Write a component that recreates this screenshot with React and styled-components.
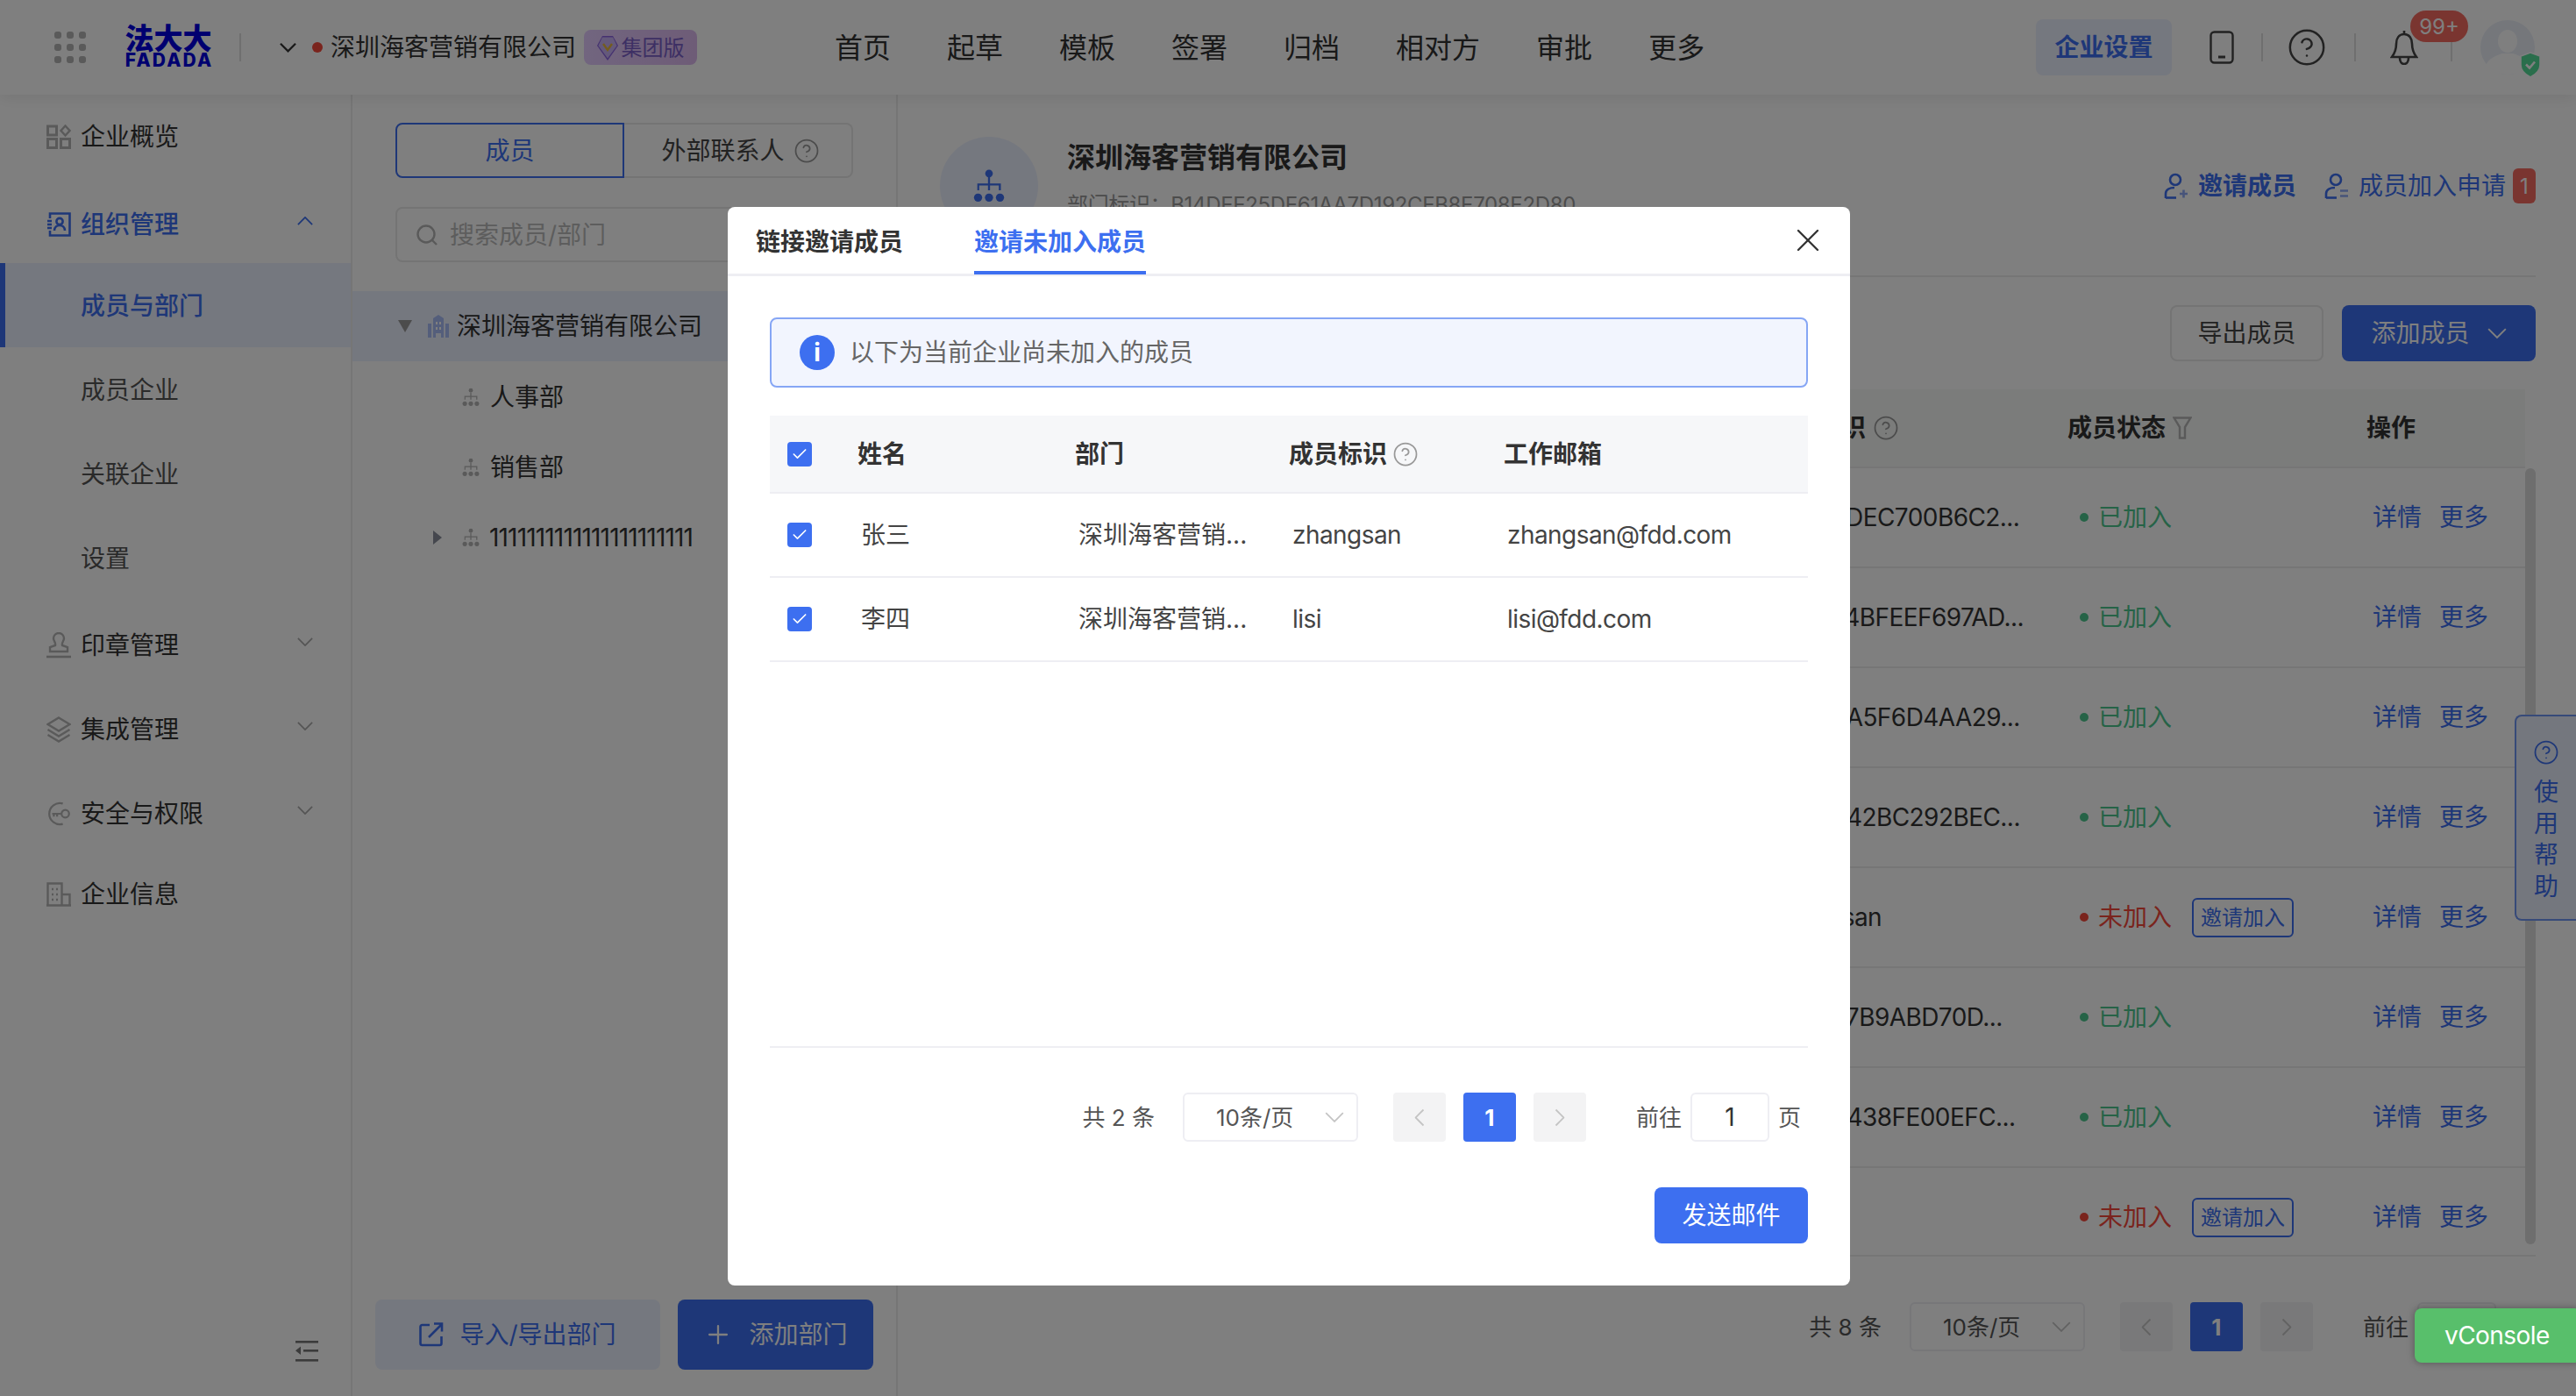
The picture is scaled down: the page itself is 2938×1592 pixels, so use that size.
import React from "react";
import styled, { createGlobalStyle } from "styled-components";
import { CircleHelp, X, Plus, Check } from "lucide-react";

const primary = "#3d6ff0";
const tint = "#ebf0fe";

const GlobalStyle = createGlobalStyle`
  html, body { margin: 0; padding: 0; background: #fff; }
  body {
    font-family: "Inter", "Noto Sans CJK SC", sans-serif;
    font-size: 28px;
    color: #333;
  }
  * { box-sizing: border-box; }
`;

// chinese glyphs sit a touch low next to Inter, this lifts them inside a centered flex row
const T = styled.span`
  display: block;
  margin-bottom: 4px;
  white-space: nowrap;
`;
const Latin = styled.span`
  letter-spacing: ${(p) => p.$ls || "-0.02em"};
`;

const Page = styled.div`
  position: relative;
  width: 2938px;
  height: 1592px;
  overflow: hidden;
  display: flex;
  flex-direction: column;
  background: #fff;
`;

/* ---------- top bar ---------- */
const TopBar = styled.header`
  position: relative;
  z-index: 2;
  flex: none;
  height: 108px;
  display: flex;
  align-items: center;
  padding-left: 62px;
  background: #fff;
  box-shadow: 0 4px 16px rgba(0, 0, 0, 0.08);
`;
const Logo = styled.div`
  margin-left: 46px;
  margin-bottom: 2px;
  width: 96px;
  display: flex;
  flex-direction: column;
  align-items: center;
  color: #0000e0;
`;
const LogoCn = styled.span`
  font-size: 33px;
  line-height: 32px;
  font-weight: 900;
  white-space: nowrap;
`;
const LogoEn = styled.span`
  font-size: 21px;
  line-height: 18px;
  font-weight: 800;
  letter-spacing: 2.2px;
  margin-right: -2.2px;
`;
const VLine = styled.i`
  flex: none;
  width: 2px;
  height: 32px;
  background: #dedede;
  margin-left: ${(p) => p.$ml || 0}px;
`;
const CompanyChevron = styled.span`
  display: flex;
  margin-left: 44px;
  color: #333;
`;
const RedDot = styled.i`
  width: 12px;
  height: 12px;
  border-radius: 50%;
  background: #f5483b;
  margin-left: 18px;
`;
const CompanyName = styled.span`
  margin-left: 9px;
  margin-bottom: 4px;
  font-size: 28px;
  color: #333;
  white-space: nowrap;
`;
const GroupBadge = styled.span`
  margin-left: 9px;
  width: 129px;
  height: 40px;
  border-radius: 8px;
  display: flex;
  align-items: center;
  justify-content: center;
  gap: 4px;
  font-size: 24px;
  color: #7a5fc8;
  background: linear-gradient(100deg, #e4ccff, #dcb8ee);
`;
const Nav = styled.nav`
  display: flex;
  gap: 64px;
  margin-left: 157px;
  margin-bottom: 4px;
  font-size: 32px;
  color: #333;
`;
const TopRight = styled.div`
  margin-left: auto;
  display: flex;
  align-items: center;
`;
const SettingBtn = styled.span`
  width: 155px;
  height: 64px;
  border-radius: 8px;
  background: ${tint};
  color: ${primary};
  font-weight: 600;
  display: flex;
  align-items: center;
  justify-content: center;
`;
const PhoneSlot = styled.span`
  display: flex;
  margin-left: 43px;
  color: #444;
`;
const HelpSlot = styled.span`
  display: flex;
  margin-left: 27px;
  color: #444;
`;
const BellSlot = styled.span`
  position: relative;
  display: flex;
  margin-left: 39px;
  margin-right: 37px;
  color: #444;
`;
const CountBadge = styled.span`
  position: absolute;
  left: 23px;
  top: -22px;
  width: 66px;
  height: 36px;
  border-radius: 18px;
  background: #f46a60;
  color: #fff;
  font-size: 24px;
  display: flex;
  align-items: center;
  justify-content: center;
`;
const Avatar = styled.span`
  position: relative;
  display: block;
  width: 62px;
  height: 62px;
  margin-left: 32px;
  margin-right: 47px;
  border-radius: 50%;
`;
const ShieldSlot = styled.span`
  position: absolute;
  left: 44px;
  top: 36px;
  display: flex;
`;

/* ---------- layout ---------- */
const Body = styled.div`
  flex: 1;
  min-height: 0;
  display: flex;
`;

/* ---------- sidebar ---------- */
const Sidebar = styled.aside`
  flex: none;
  width: 402px;
  border-right: 2px solid #ececec;
  display: flex;
  flex-direction: column;
  position: relative;
`;
const NavRow = styled.div`
  height: 96px;
  margin-top: ${(p) => p.$mt || 0}px;
  padding-top: ${(p) => p.$pt || 0}px;
  padding-left: 53px;
  padding-right: 43px;
  display: flex;
  align-items: center;
  gap: 11px;
  color: ${(p) => (p.$active ? primary : "#333")};
  font-weight: ${(p) => (p.$active ? 500 : 400)};
`;
const NavChevron = styled.span`
  margin-left: auto;
  display: flex;
  transform: translateY(-4px);
  color: ${(p) => (p.$active ? primary : "#aaa")};
`;
const SubRow = styled.div`
  height: 96px;
  padding-left: ${(p) => (p.$active ? 86 : 92)}px;
  padding-top: 2px;
  display: flex;
  align-items: center;
  color: ${(p) => (p.$active ? primary : "#555")};
  font-weight: ${(p) => (p.$active ? 500 : 400)};
  background: ${(p) => (p.$active ? tint : "transparent")};
  border-left: ${(p) => (p.$active ? `6px solid ${primary}` : "none")};
`;
const Collapse = styled.span`
  position: absolute;
  left: 337px;
  bottom: 39px;
  display: flex;
  color: #bbb;
`;

/* ---------- tree panel ---------- */
const TreePanel = styled.section`
  flex: none;
  width: 622px;
  border-right: 2px solid #ececec;
  padding-top: 32px;
  display: flex;
  flex-direction: column;
`;
const Switch = styled.div`
  margin: 0 49px;
  height: 63px;
  display: flex;
`;
const SwitchItem = styled.div`
  flex: none;
  width: ${(p) => p.$w}px;
  display: flex;
  align-items: center;
  justify-content: center;
  gap: 10px;
  padding-left: ${(p) => p.$pl || 0}px;
  border: 2px solid ${(p) => (p.$active ? primary : "#e8e8e8")};
  border-left-width: ${(p) => (p.$active ? 2 : 0)}px;
  border-radius: ${(p) => (p.$active ? "8px 0 0 8px" : "0 8px 8px 0")};
  color: ${(p) => (p.$active ? primary : "#444")};
`;
const HelpTint = styled.span`
  display: inline-flex;
  color: ${(p) => p.$c || "#999"};
`;
const Search = styled.div`
  margin: 33px 50px 0 49px;
  height: 63px;
  border: 2px solid #e8e8e8;
  border-radius: 8px;
  display: flex;
  align-items: center;
  gap: 14px;
  padding-left: 22px;
  color: #bbb;
`;
const Tree = styled.div`
  margin-top: 33px;
`;
const TreeRow = styled.div`
  height: 80px;
  display: flex;
  align-items: center;
  padding-left: ${(p) => p.$indent}px;
  padding-top: ${(p) => (p.$active ? 0 : 2)}px;
  background: ${(p) => (p.$active ? tint : "transparent")};
  color: #333;
`;
const Caret = styled.span`
  flex: none;
  width: 0;
  height: 0;
  ${(p) =>
    p.$open
      ? `border-left: 8px solid transparent; border-right: 8px solid transparent; border-top: 14px solid #999; margin-right: 18px;`
      : `border-top: 8px solid transparent; border-bottom: 8px solid transparent; border-left: 10px solid #8a8f9c; margin-right: 22px;`}
`;
const TreeIcon = styled.span`
  display: flex;
  flex: none;
  margin-right: ${(p) => p.$mr}px;
`;
const TreeFoot = styled.div`
  margin-top: auto;
  padding: 0 0 30px 26px;
  display: flex;
  gap: 20px;
`;
const GhostBtn = styled.div`
  width: ${(p) => p.$w}px;
  height: 80px;
  border-radius: 8px;
  background: ${tint};
  color: ${primary};
  display: flex;
  align-items: center;
  justify-content: center;
  gap: 18px;
`;
const SolidBtn = styled.div`
  width: ${(p) => p.$w}px;
  height: ${(p) => p.$h}px;
  border-radius: 8px;
  background: ${primary};
  color: #fff;
  display: flex;
  align-items: center;
  justify-content: center;
  gap: ${(p) => p.$gap || 0}px;
`;

/* ---------- main panel ---------- */
const Main = styled.main`
  flex: 1;
  min-width: 0;
  padding: 0 46px 0 48px;
  display: flex;
  flex-direction: column;
`;
const MainHead = styled.div`
  height: 208px;
  padding-top: 48px;
  border-bottom: 2px solid #ececec;
  display: flex;
`;
const OrgBubble = styled.div`
  flex: none;
  width: 112px;
  height: 112px;
  border-radius: 50%;
  background: ${tint};
  display: flex;
  align-items: center;
  justify-content: center;
  color: ${primary};
`;
const HeadText = styled.div`
  margin-left: 33px;
  padding-top: 2px;
`;
const HeadTitle = styled.div`
  font-size: 32px;
  line-height: 44px;
  font-weight: 700;
  color: #333;
`;
const HeadSub = styled.div`
  margin-top: 16px;
  font-size: 24px;
  line-height: 32px;
  letter-spacing: -0.35px;
  color: #999;
`;
const HeadLinks = styled.div`
  margin-left: auto;
  padding-top: 36px;
  display: flex;
  align-items: flex-start;
  height: 56px;
  color: ${primary};
`;
const HeadLink = styled.span`
  display: flex;
  align-items: center;
  gap: 11px;
  height: 40px;
  font-weight: ${(p) => p.$w || 400};
  margin-left: ${(p) => p.$ml || 0}px;
`;
const CountTag = styled.span`
  margin-left: 8px;
  width: 26px;
  height: 40px;
  border-radius: 6px;
  background: #f46a60;
  color: #fff;
  font-size: 24px;
  display: flex;
  align-items: center;
  justify-content: center;
`;
const Toolbar = styled.div`
  padding-top: 32px;
  height: 128px;
  display: flex;
  justify-content: flex-end;
  gap: 21px;
`;
const OutlineBtn = styled.div`
  width: 175px;
  height: 64px;
  border: 2px solid #e8e8e8;
  border-radius: 8px;
  color: #444;
  display: flex;
  align-items: center;
  justify-content: center;
`;
const MemberTable = styled.div`
  position: relative;
  height: 989px;
  overflow: hidden;
  border-bottom: 2px solid #ececec;
`;
const MemberRow = styled.div`
  display: grid;
  grid-template-columns: 944px 342px 341px 1fr;
  align-items: center;
  margin-right: 12px;
  height: ${(p) => (p.$head ? 90 : 114)}px;
  background: ${(p) => (p.$head ? "#f6f8f6" : "transparent")};
  border-bottom: 2px solid #ececec;
`;
const HeadCell = styled.div`
  display: flex;
  align-items: center;
  gap: 8px;
  font-weight: 700;
  color: #333;
  white-space: nowrap;
`;
const IdCell = styled.div`
  padding-left: 6px;
  color: #333;
  letter-spacing: -0.02em;
  white-space: nowrap;
`;
const StatusCell = styled.div`
  padding-left: 14px;
  display: flex;
  align-items: center;
`;
const StatusDot = styled.i`
  width: 10px;
  height: 10px;
  border-radius: 50%;
  background: ${(p) => (p.$on ? "#4cc78e" : "#f5483b")};
  margin-right: 11px;
`;
const StatusText = styled(T)`
  color: ${(p) => (p.$on ? "#4cc78e" : "#f5483b")};
`;
const InviteBtn = styled.span`
  margin-left: 23px;
  width: 116px;
  height: 45px;
  border: 2px solid ${primary};
  border-radius: 6px;
  color: ${primary};
  font-size: 24px;
  display: flex;
  align-items: center;
  justify-content: center;
  white-space: nowrap;
`;
const OpsCell = styled.div`
  display: flex;
  gap: 20px;
  padding-left: 7px;
  color: ${primary};
`;
const ScrollThumb = styled.div`
  position: absolute;
  right: 0;
  top: 90px;
  bottom: 12px;
  width: 12px;
  border-radius: 6px;
  background: #dcdcdc;
`;

/* ---------- pagination ---------- */
const Pager = styled.div`
  display: flex;
  justify-content: flex-end;
  align-items: center;
  height: 56px;
  margin-top: ${(p) => p.$mt}px;
  padding-right: ${(p) => p.$pr || 0}px;
  font-size: 26px;
  color: #555;
`;
const PagerSelect = styled.div`
  width: 200px;
  height: 56px;
  margin: 0 40px 0 32px;
  border: 2px solid #eeeef3;
  border-radius: 6px;
  display: flex;
  align-items: center;
  padding: 0 14px 0 36px;
  justify-content: space-between;
  color: #555;
`;
const PageBtn = styled.div`
  width: 60px;
  height: 56px;
  margin-right: ${(p) => p.$mr || 0}px;
  border-radius: 4px;
  background: ${(p) => (p.$active ? primary : "#f3f3f4")};
  color: ${(p) => (p.$active ? "#fff" : "#c4c4c4")};
  font-weight: 700;
  display: flex;
  align-items: center;
  justify-content: center;
`;
const PageInput = styled.div`
  width: 90px;
  height: 56px;
  margin: 0 10px;
  border: 2px solid #eeeef3;
  border-radius: 6px;
  color: #333;
  font-size: 28px;
  display: flex;
  align-items: center;
  justify-content: center;
`;

/* ---------- floating parts ---------- */
const HelpTab = styled.div`
  position: absolute;
  right: 0;
  top: 815px;
  width: 70px;
  height: 235px;
  background: #e8eefd;
  border: 2px solid #6f94f3;
  border-right: none;
  border-radius: 8px 0 0 8px;
  color: ${primary};
  display: flex;
  flex-direction: column;
  align-items: center;
  padding-top: 26px;
  line-height: 36px;
`;
const HelpChars = styled.div`
  width: 28px;
  margin-top: 12px;
  text-align: center;
`;
const Mask = styled.div`
  position: absolute;
  inset: 0;
  z-index: 10;
  background: rgba(0, 0, 0, 0.5);
`;
const VConsole = styled.div`
  position: absolute;
  z-index: 30;
  left: 2754px;
  top: 1492px;
  width: 190px;
  height: 62px;
  border-radius: 8px;
  background: #58bf6b;
  color: #fff;
  letter-spacing: -0.02em;
  box-shadow: 0 0 8px rgba(0, 0, 0, 0.35);
  display: flex;
  align-items: center;
  padding-left: 34px;
`;

/* ---------- dialog ---------- */
const Dialog = styled.div`
  position: absolute;
  z-index: 20;
  left: 830px;
  top: 236px;
  width: 1280px;
  height: 1230px;
  border-radius: 8px;
  background: #fff;
  display: flex;
  flex-direction: column;
`;
const DialogTabs = styled.div`
  flex: none;
  height: 79px;
  border-bottom: 3px solid #eeeef3;
  padding: 0 26px 0 32px;
  display: flex;
  align-items: center;
  gap: 81px;
`;
const DialogTab = styled.span`
  position: relative;
  font-weight: 700;
  color: ${(p) => (p.$active ? primary : "#333")};
  white-space: nowrap;
  &::after {
    content: "";
    display: ${(p) => (p.$active ? "block" : "none")};
    position: absolute;
    left: 0;
    right: 0;
    bottom: -19px;
    height: 4px;
    background: ${primary};
  }
`;
const CloseSlot = styled.span`
  margin-left: auto;
  display: flex;
  color: #333;
`;
const DialogBody = styled.div`
  flex: 1;
  padding: 47px 48px 0;
  display: flex;
  flex-direction: column;
`;
const InfoBar = styled.div`
  flex: none;
  height: 80px;
  border: 2px solid #86a6f5;
  border-radius: 8px;
  background: #f2f5fe;
  padding-left: 32px;
  display: flex;
  align-items: center;
  gap: 17px;
  color: #666;
`;
const InfoDot = styled.span`
  width: 40px;
  height: 40px;
  border-radius: 50%;
  background: ${primary};
  color: #fff;
  font-weight: 700;
  font-size: 28px;
  display: flex;
  align-items: center;
  justify-content: center;
`;
const PickTable = styled.div`
  flex: none;
  margin-top: 32px;
  height: 721px;
  border-bottom: 2px solid #eeeef3;
`;
const PickRow = styled.div`
  display: grid;
  grid-template-columns: 100px 248px 244px 245px 1fr;
  align-items: center;
  height: ${(p) => (p.$head ? 89 : 96)}px;
  border-bottom: 2px solid #eeeef3;
  background: ${(p) => (p.$head ? "#f6f7f9" : "transparent")};
`;
const PickHead = styled.div`
  display: flex;
  align-items: center;
  gap: 6px;
  font-weight: 700;
  color: #333;
`;
const PickCell = styled.div`
  padding-left: 4px;
  color: #444;
  white-space: nowrap;
`;
const Tick = styled.span`
  display: flex;
  align-items: center;
  justify-content: center;
  margin-left: 20px;
  width: 28px;
  height: 28px;
  border-radius: 4px;
  background: ${primary};
  color: #fff;
`;
const DialogFoot = styled.div`
  margin-top: 52px;
  display: flex;
  justify-content: flex-end;
`;

/* ---------- icons ---------- */
const GridDots = () => (
  <svg width="36" height="36" viewBox="0 0 36 36" fill="#b4b4b4">
    {[0, 14, 28].flatMap((y) =>
      [0, 14, 28].map((x) => <rect key={`${x}-${y}`} x={x} y={y} width="8" height="8" rx="3" />)
    )}
  </svg>
);
const Chevron = ({ w = 18, h = 10, up, sw = 2, rotate }) => (
  <svg width={w} height={h} viewBox="0 0 20 11" fill="none" stroke="currentColor" strokeWidth={sw}
    style={rotate ? { transform: `rotate(${rotate}deg)` } : undefined}>
    <polyline points={up ? "1,10 10,1 19,10" : "1,1 10,10 19,1"} />
  </svg>
);
const Gem = () => (
  <svg width="24" height="30" viewBox="0 0 24 30">
    <path d="M6 2h12l6 11-12 17L0 13z" fill="#8a63e0" />
    <path d="M6 3.5h12l4.6 9.5L12 27.5 1.4 13z" fill="#c9b2f7" />
    <path d="M7 11l5 7 5-7" fill="none" stroke="#e8b93d" strokeWidth="2.4" />
  </svg>
);
const Phone = () => (
  <svg width="28" height="38" viewBox="0 0 28 38" fill="none" stroke="currentColor" strokeWidth="2.4">
    <rect x="1.5" y="1.5" width="25" height="35" rx="4" />
    <line x1="10" y1="30" x2="18" y2="30" strokeWidth="3" />
  </svg>
);
const Bell = () => (
  <svg width="32" height="40" viewBox="0 0 32 40" fill="none" stroke="currentColor" strokeWidth="2.6">
    <path d="M16 1v4M16 5c-6 0-9 5-9 11 0 7-2 11-5 15h28c-3-4-5-8-5-15 0-6-3-11-9-11z" />
    <path d="M11 32c0 4 2 7 5 7s5-3 5-7" />
  </svg>
);
const AvatarArt = () => (
  <svg width="62" height="62" viewBox="0 0 62 62">
    <circle cx="31" cy="31" r="31" fill="#eaeef7" />
    <ellipse cx="31" cy="24" rx="11" ry="13" fill="#fff" />
    <path d="M6 52c3-9 13-12 19-14h12c6 2 16 5 19 14-6 6-15 10-25 10S12 58 6 52z" fill="#fff" />
  </svg>
);
const Shield = () => (
  <svg width="26" height="30" viewBox="0 0 26 30">
    <path d="M13 1l11 4v10c0 7-5 11-11 14C7 26 2 22 2 15V5z" fill="#55dc98" stroke="#fff" strokeWidth="1.6" />
    <path d="M8 14.500l4 4 6-7" fill="none" stroke="#fff" strokeWidth="2.6" />
  </svg>
);
const OrgTree = ({ size = 24, color = "currentColor" }) => (
  <svg width={size} height={size} viewBox="0 0 24 24" fill={color} stroke="none">
    <circle cx="12" cy="3.5" r="2.6" />
    <path d="M11.3 6h1.4v4.3h7.4v4.7h-1.4v-3.3h-6v3.3h-1.4v-3.3h-6v3.3H4v-4.7h7.3z" />
    <circle cx="4.5" cy="20" r="2.8" />
    <circle cx="12" cy="20" r="2.8" />
    <circle cx="19.5" cy="20" r="2.8" />
  </svg>
);
const Building = ({ color = "#a8bdf7" }) => (
  <svg width="24" height="26" viewBox="0 0 24 26" fill={color}>
    <path d="M6 26V4l6-4 6 4v22h-3v-5h-6v5z" />
    <rect x="0" y="10" width="4" height="16" />
    <rect x="20" y="10" width="4" height="16" />
    <rect x="9" y="8" width="2" height="3" fill="#fff" />
    <rect x="13" y="8" width="2" height="3" fill="#fff" />
    <rect x="9" y="14" width="2" height="3" fill="#fff" />
    <rect x="13" y="14" width="2" height="3" fill="#fff" />
  </svg>
);
const IconOverview = () => (
  <svg width="28" height="28" viewBox="0 0 28 28" fill="none" stroke="#b4b4b4" strokeWidth="3">
    <rect x="1.5" y="2" width="10" height="10" />
    <rect x="1.5" y="16.5" width="10" height="10" />
    <rect x="16.5" y="16.5" width="10" height="10" />
    <path d="M21.5 1.5l5 5.5-5 5.5-5-5.5z" strokeWidth="2.4" />
  </svg>
);
const IconOrg = () => (
  <svg width="28" height="28" viewBox="0 0 28 28" fill="none" stroke={primary} strokeWidth="2.6">
    <path d="M4 7V1.5h22.5v25H4V21" />
    <path d="M1 10h5M1 14h5M1 18h5" />
    <circle cx="15" cy="10.5" r="3.6" />
    <path d="M9 21c0-4 3-6 6-6s6 2 6 6" />
  </svg>
);
const IconStamp = () => (
  <svg width="28" height="30" viewBox="0 0 28 30" fill="none" stroke="#b4b4b4" strokeWidth="2.4">
    <path d="M10 15c1-3-2-5-2-8a6 6 0 0 1 12 0c0 3-3 5-2 8l6 2v5H4v-5z" />
    <path d="M0 28h28" strokeWidth="2.6" />
  </svg>
);
const IconLayers = () => (
  <svg width="28" height="30" viewBox="0 0 28 30" fill="none" stroke="#b4b4b4" strokeWidth="2.4">
    <path d="M14 1.5L26.5 9 14 16.5 1.5 9z" />
    <path d="M1.5 15L14 22.5 26.5 15" />
    <path d="M1.5 21L14 28.5 26.5 21" />
  </svg>
);
const IconKey = () => (
  <svg width="28" height="30" viewBox="0 0 30 32" fill="none" stroke="#b4b4b4" strokeWidth="2.4">
    <path d="M20 3.5A13 13 0 1 0 20 28.500" />
    <circle cx="23" cy="16" r="4.6" />
    <path d="M18 16H7M9 16v3.400M13 16v3.400" />
  </svg>
);
const IconBuilding = () => (
  <svg width="28" height="28" viewBox="0 0 28 28" fill="none" stroke="#b4b4b4" strokeWidth="2.4">
    <path d="M1.500 26.500V1.500h16v25zM17.500 14h9v12.500h-9M0 26.500h28" />
    <path d="M6 8h2M11 8h2M6 14h2M11 14h2M6 20h2M11 20h2" />
  </svg>
);
const IconCollapse = () => (
  <svg width="26" height="24" viewBox="0 0 26 24" fill="#777">
    <rect y="0" width="26" height="2.600" />
    <rect y="21" width="26" height="2.600" />
    <rect x="9" y="10" width="17" height="2.600" />
    <path d="M0 11.300L6 6.500v9.600z" />
  </svg>
);
const SearchGlyph = () => (
  <svg width="24" height="24" viewBox="0 0 24 24" fill="none" stroke="#b4b4b4" strokeWidth="2.4">
    <circle cx="11" cy="11" r="9.500" />
    <path d="M18 18l5 5" />
  </svg>
);
const ExportGlyph = () => (
  <svg width="28" height="28" viewBox="0 0 28 28" fill="none" stroke={primary} strokeWidth="2.600">
    <path d="M12 3H3.500a2 2 0 0 0-2 2v19a2 2 0 0 0 2 2h20a2 2 0 0 0 2-2v-8" />
    <path d="M11 17L26 2M17 1.500h9v9" />
  </svg>
);
const PersonPlus = () => (
  <svg width="28" height="30" viewBox="0 0 28 30" fill="none" stroke={primary} strokeWidth="2.600">
    <circle cx="13" cy="8" r="6" />
    <path d="M2 29v-5c0-5 5-7 10-7" />
    <path d="M2 28.500h12" />
    <path d="M18 24h9M22.500 19.500v9" stroke="#8ea9f5" />
  </svg>
);
const PersonList = () => (
  <svg width="28" height="30" viewBox="0 0 28 30" fill="none" stroke={primary} strokeWidth="2.600">
    <circle cx="13" cy="8" r="6" />
    <path d="M2 29v-5c0-5 5-7 10-7" />
    <path d="M2 28.500h12" />
    <path d="M18 20.500h9M18 26.500h9" stroke="#8ea9f5" />
  </svg>
);
const Funnel = () => (
  <svg width="22" height="26" viewBox="0 0 22 26" fill="none" stroke="#b4b4b4" strokeWidth="2.400">
    <path d="M1.500 1.500h19L14 12v12.500H8V12z" />
  </svg>
);

/* ---------- data ---------- */
const navItems = ["首页", "起草", "模板", "签署", "归档", "相对方", "审批", "更多"];
const rows = [
  { id: "3A91CDEC700B6C2...", on: true },
  { id: "7F02E4BFEEF697AD...", on: true },
  { id: "C18D2A5F6D4AA29...", on: true },
  { id: "E60BF42BC292BEC...", on: true },
  { id: "zhangsan", on: false },
  { id: "91AD67B9ABD70D...", on: true },
  { id: "5C27E438FE00EFC...", on: true },
  { id: "", on: false },
];
const picks = [
  { name: "张三", tag: "zhangsan", mail: "zhangsan@fdd.com" },
  { name: "李四", tag: "lisi", mail: "lisi@fdd.com" },
];

const Pagination = ({ total, mt, pr }) => (
  <Pager $mt={mt} $pr={pr}>
    <T>共 {total} 条</T>
    <PagerSelect>
      <T>10条/页</T>
      <HelpTint $c="#c4c4c4"><Chevron w={22} h={12} sw={1.6} /></HelpTint>
    </PagerSelect>
    <PageBtn $mr={20}><Chevron w={20} h={11} sw={1.8} rotate={90} /></PageBtn>
    <PageBtn $active $mr={20}>1</PageBtn>
    <PageBtn $mr={57}><Chevron w={20} h={11} sw={1.8} rotate={-90} /></PageBtn>
    <T>前往</T>
    <PageInput>1</PageInput>
    <T>页</T>
  </Pager>
);

export default function App() {
  return (
    <Page>
      <GlobalStyle />
      <TopBar>
        <GridDots />
        <Logo>
          <LogoCn>法大大</LogoCn>
          <LogoEn>FADADA</LogoEn>
        </Logo>
        <VLine $ml={33} />
        <CompanyChevron><Chevron w={19} h={12} sw={2.4} /></CompanyChevron>
        <RedDot />
        <CompanyName>深圳海客营销有限公司</CompanyName>
        <GroupBadge><Gem /><T>集团版</T></GroupBadge>
        <Nav>
          {navItems.map((n) => <span key={n}>{n}</span>)}
        </Nav>
        <TopRight>
          <SettingBtn><T>企业设置</T></SettingBtn>
          <PhoneSlot><Phone /></PhoneSlot>
          <VLine $ml={31} />
          <HelpSlot><CircleHelp size={46} strokeWidth={1.3} /></HelpSlot>
          <VLine $ml={31} />
          <BellSlot>
            <Bell />
            <CountBadge>99+</CountBadge>
          </BellSlot>
          <VLine />
          <Avatar>
            <AvatarArt />
            <ShieldSlot><Shield /></ShieldSlot>
          </Avatar>
        </TopRight>
      </TopBar>

      <Body>
        <Sidebar>
          <NavRow><IconOverview /><T>企业概览</T></NavRow>
          <NavRow $active $pt={8}>
            <IconOrg /><T>组织管理</T>
            <NavChevron $active><Chevron up /></NavChevron>
          </NavRow>
          <SubRow $active><T>成员与部门</T></SubRow>
          <SubRow><T>成员企业</T></SubRow>
          <SubRow><T>关联企业</T></SubRow>
          <SubRow><T>设置</T></SubRow>
          <NavRow $mt={4}><IconStamp /><T>印章管理</T><NavChevron><Chevron /></NavChevron></NavRow>
          <NavRow><IconLayers /><T>集成管理</T><NavChevron><Chevron /></NavChevron></NavRow>
          <NavRow><IconKey /><T>安全与权限</T><NavChevron><Chevron /></NavChevron></NavRow>
          <NavRow $mt={-4}><IconBuilding /><T>企业信息</T></NavRow>
          <Collapse><IconCollapse /></Collapse>
        </Sidebar>

        <TreePanel>
          <Switch>
            <SwitchItem $active $w={261}><T>成员</T></SwitchItem>
            <SwitchItem $w={261} $pl={6}><T>外部联系人</T><HelpTint><CircleHelp size={30} strokeWidth={1.4} /></HelpTint></SwitchItem>
          </Switch>
          <Search><SearchGlyph /><T>搜索成员/部门</T></Search>
          <Tree>
            <TreeRow $active $indent={52}>
              <Caret $open />
              <TreeIcon $mr={9}><Building /></TreeIcon>
              <T>深圳海客营销有限公司</T>
            </TreeRow>
            <TreeRow $indent={124}><TreeIcon $mr={11}><OrgTree size={22} color="#b4b4b4" /></TreeIcon><T>人事部</T></TreeRow>
            <TreeRow $indent={124}><TreeIcon $mr={11}><OrgTree size={22} color="#b4b4b4" /></TreeIcon><T>销售部</T></TreeRow>
            <TreeRow $indent={92}>
              <Caret />
              <TreeIcon $mr={10}><OrgTree size={22} color="#b4b4b4" /></TreeIcon>
              <Latin $ls="-0.03em">1111111111111111111111</Latin>
            </TreeRow>
          </Tree>
          <TreeFoot>
            <GhostBtn $w={325}><ExportGlyph /><T>导入/导出部门</T></GhostBtn>
            <SolidBtn $w={223} $h={80} $gap={18}><Plus size={34} strokeWidth={1.6} /><T>添加部门</T></SolidBtn>
          </TreeFoot>
        </TreePanel>

        <Main>
          <MainHead>
            <OrgBubble><OrgTree size={40} /></OrgBubble>
            <HeadText>
              <HeadTitle>深圳海客营销有限公司</HeadTitle>
              <HeadSub>部门标识：B14DEE25DE61AA7D192CEB8E708E2D80</HeadSub>
            </HeadText>
            <HeadLinks>
              <HeadLink $w={600}><PersonPlus /><T>邀请成员</T></HeadLink>
              <HeadLink $ml={32}><PersonList /><T>成员加入申请</T></HeadLink>
              <CountTag>1</CountTag>
            </HeadLinks>
          </MainHead>
          <Toolbar>
            <OutlineBtn><T>导出成员</T></OutlineBtn>
            <SolidBtn $w={221} $h={64} $gap={20}><T>添加成员</T><Chevron w={22} h={12} sw={1.8} /></SolidBtn>
          </Toolbar>
          <MemberTable>
            <MemberRow $head>
              <span />
              <HeadCell><T>成员标识</T><HelpTint><CircleHelp size={30} strokeWidth={1.4} /></HelpTint></HeadCell>
              <HeadCell><T>成员状态</T><Funnel /></HeadCell>
              <HeadCell><T>操作</T></HeadCell>
            </MemberRow>
            {rows.map((r, i) => (
              <MemberRow key={i}>
                <span />
                <IdCell>{r.id}</IdCell>
                <StatusCell>
                  <StatusDot $on={r.on} />
                  <StatusText $on={r.on}>{r.on ? "已加入" : "未加入"}</StatusText>
                  {!r.on && <InviteBtn><T>邀请加入</T></InviteBtn>}
                </StatusCell>
                <OpsCell><T>详情</T><T>更多</T></OpsCell>
              </MemberRow>
            ))}
            <ScrollThumb />
          </MemberTable>
          <Pagination total={8} mt={52} pr={9} />
        </Main>
      </Body>

      <HelpTab>
        <CircleHelp size={30} strokeWidth={1.4} />
        <HelpChars>使用帮助</HelpChars>
      </HelpTab>

      <Mask />

      <Dialog>
        <DialogTabs>
          <DialogTab>链接邀请成员</DialogTab>
          <DialogTab $active>邀请未加入成员</DialogTab>
          <CloseSlot><X size={44} strokeWidth={1.3} /></CloseSlot>
        </DialogTabs>
        <DialogBody>
          <InfoBar><InfoDot>i</InfoDot><T>以下为当前企业尚未加入的成员</T></InfoBar>
          <PickTable>
            <PickRow $head>
              <Tick><Check size={20} strokeWidth={2} /></Tick>
              <PickHead><T>姓名</T></PickHead>
              <PickHead><T>部门</T></PickHead>
              <PickHead><T>成员标识</T><HelpTint><CircleHelp size={30} strokeWidth={1.4} /></HelpTint></PickHead>
              <PickHead><T>工作邮箱</T></PickHead>
            </PickRow>
            {picks.map((p) => (
              <PickRow key={p.tag}>
                <Tick><Check size={20} strokeWidth={2} /></Tick>
                <PickCell><T>{p.name}</T></PickCell>
                <PickCell><T>深圳海客营销...</T></PickCell>
                <PickCell><Latin>{p.tag}</Latin></PickCell>
                <PickCell><Latin>{p.mail}</Latin></PickCell>
              </PickRow>
            ))}
          </PickTable>
          <Pagination total={2} mt={51} pr={8} />
          <DialogFoot>
            <SolidBtn $w={175} $h={64}><T>发送邮件</T></SolidBtn>
          </DialogFoot>
        </DialogBody>
      </Dialog>

      <VConsole>vConsole</VConsole>
    </Page>
  );
}
